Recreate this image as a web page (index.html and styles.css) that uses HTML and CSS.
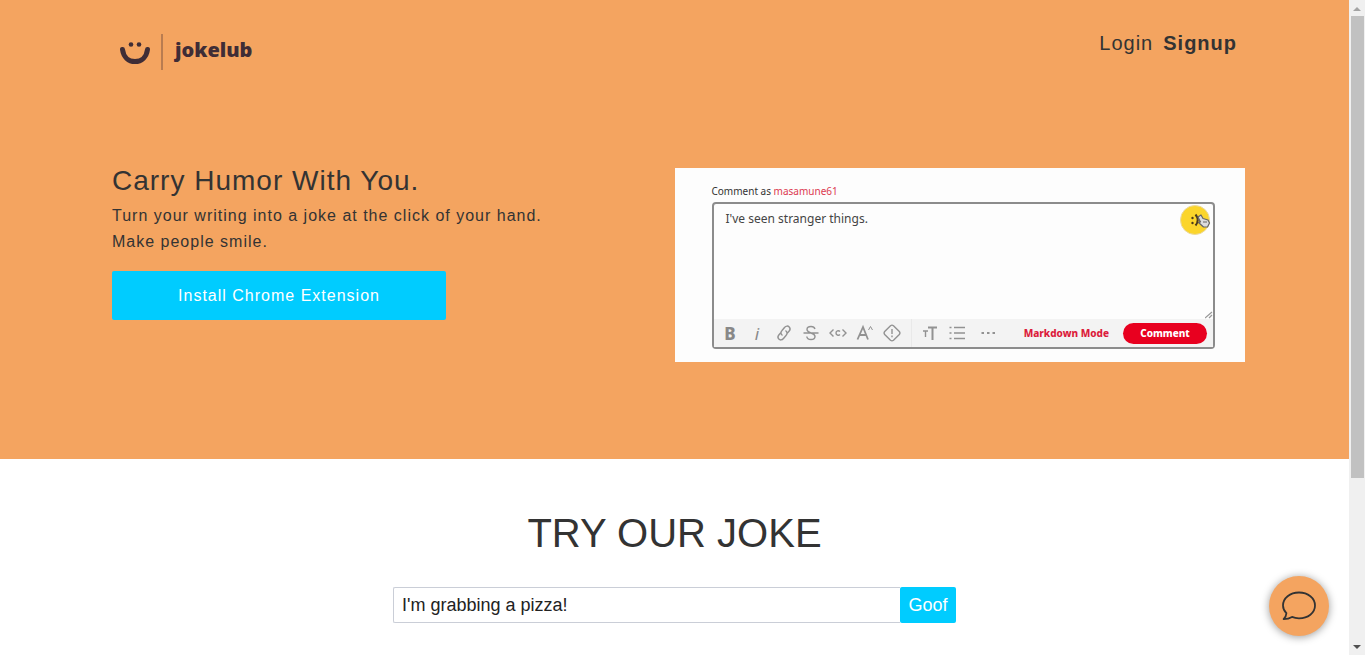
FILE: index.html
```html
<!DOCTYPE html>
<html lang="en">
<head>
  <meta charset="UTF-8">
  <meta name="viewport" content="width=device-width, initial-scale=1.0">
  <title>Jokelub</title>
  <link rel="stylesheet" href="styles.css">
</head>
<body>

  <div class="page">
    <!-- Hero -->
    <div class="hero">
      <header class="navbar">
        <a class="logo" href="#">
          <svg class="logo-smile" width="32" height="26" viewBox="0 0 32 26">
            <circle cx="12" cy="5.500" r="2.300" fill="#3f2d36"/>
            <circle cx="20" cy="5.500" r="2.300" fill="#3f2d36"/>
            <path d="M3.500 10.500C4.500 18 9.500 22.500 16 22.500S27.500 18 28.500 10.500" fill="none" stroke="#3f2d36" stroke-width="5" stroke-linecap="round"/>
          </svg>
          <span class="logo-name">jokelub</span>
        </a>
        <nav class="nav-links">
          <a href="#">Login</a>
          <a class="signup" href="#">Signup</a>
        </nav>
      </header>

      <div class="columns">
        <div class="column intro">
          <h1>Carry Humor With You.</h1>
          <p>Turn your writing into a joke at the click of your hand.<br>Make people smile.</p>
          <button class="install" type="button">Install Chrome Extension</button>
        </div>

        <!-- Demo of the comment box -->
        <div class="column demo">
          <label class="demo-label" for="comment">Comment as <span>masamune61</span></label>
          <div class="demo-box">
            <textarea id="comment" class="demo-text" readonly>I've seen stranger things.</textarea>
            <svg class="demo-emoji" width="32" height="30" viewBox="0 0 32 30">
              <circle cx="15" cy="15" r="14.500" fill="#fbd52b" stroke="#ead9a0" stroke-width="1"/>
              <circle cx="12.500" cy="13" r="1.200" fill="#4a3a1c"/>
              <circle cx="12.500" cy="18" r="1.200" fill="#4a3a1c"/>
              <path d="M15.500 9.500q4.500 5.500 0 11" fill="none" stroke="#4a3a1c" stroke-width="2"/>
              <path d="M18 12l3-2 2 3.500 5 1.500 1.500 3-2 4h-4l-5-4.500 2-.500z" fill="#ddd" stroke="#666" stroke-width="1.200" stroke-linejoin="round"/>
              <path d="M20 17l-2-3M23 17h4" stroke="#666" fill="none"/>
            </svg>
            <svg class="demo-grip" width="8" height="8" viewBox="0 0 8 8">
              <path d="M0 7l7-6M4 7l3-3" stroke="#999" stroke-width="1.200"/>
            </svg>
            <div class="toolbar">
              <button type="button" class="tool bold">B</button>
              <button type="button" class="tool italic">i</button>
              <button type="button" class="tool" aria-label="Link">
                <svg width="18" height="18" viewBox="0 0 18 18"><path d="M7.500 11.500c-2-1.500-2-3.500-.500-5l2.500-3c1.500-1.800 3.500-1.800 4.700-.600 1.200 1.200 1 3-.200 4.400L12 9.500M10.500 6.500c2 1.500 2 3.500.500 5l-2.500 3c-1.500 1.800-3.500 1.800-4.700.600-1.200-1.200-1-3 .200-4.400L6 8.500"/></svg>
              </button>
              <button type="button" class="tool" aria-label="Strikethrough">
                <svg width="18" height="18" viewBox="0 0 18 18"><path d="M13 5c-.500-1.700-2-2.500-4-2.500S5 3.500 5 5.500C5 7.500 7 8.300 9 9s4 1.500 4 3.500-2 3-4 3-4-1-4.200-3M1.500 9h15"/></svg>
              </button>
              <button type="button" class="tool" aria-label="Code">
                <svg width="18" height="18" viewBox="0 0 18 18"><path d="M4.500 5.500L1 9l3.500 3.500M13.500 5.500L17 9l-3.500 3.500M11 7.500C9.500 6 7 7 7 9s2.500 3 4 1.500"/></svg>
              </button>
              <button type="button" class="tool" aria-label="Superscript">
                <svg width="18" height="18" viewBox="0 0 18 18"><path d="M1.500 15.500L7 3l5 12.500M3.500 11h7" stroke-width="1.800"/><path d="M12.500 6l2-3.500 2 3.500" stroke-width="1"/></svg>
              </button>
              <button type="button" class="tool" aria-label="Spoiler">
                <svg width="18" height="18" viewBox="0 0 18 18"><path d="M7.500 1.700q1.500-1.200 3 0l5.800 5.800q1.200 1.500 0 3l-5.800 5.800q-1.500 1.200-3 0L1.700 10.500q-1.200-1.500 0-3zM9 5v5M9 11.500v1.800"/></svg>
              </button>
              <span class="divider"></span>
              <button type="button" class="tool" aria-label="Heading">
                <svg width="18" height="18" viewBox="0 0 18 18"><path d="M7 3.500h9M11.500 3.500v12.500" stroke-width="2"/><path d="M2 7h5M4.500 7v6"/></svg>
              </button>
              <button type="button" class="tool" aria-label="List">
                <svg width="18" height="18" viewBox="0 0 18 18"><path d="M6 3.500h11M6 9h11M6 14.500h11M1.500 3.500h2M1.500 9h2M1.500 14.500h2"/></svg>
              </button>
              <button type="button" class="tool more" aria-label="More">
                <svg width="18" height="18" viewBox="0 0 18 18"><path d="M2.500 9h2.500M8 9h2.500M13.500 9H16" stroke-width="2.200"/></svg>
              </button>
              <button type="button" class="markdown">Markdown Mode</button>
              <button type="button" class="comment">Comment</button>
            </div>
          </div>
        </div>
      </div>
    </div>

    <!-- Try it -->
    <section class="try">
      <h2>TRY OUR JOKE</h2>
      <form class="joke-form">
        <input type="text" value="I'm grabbing a pizza!" aria-label="Your sentence">
        <button type="submit">Goof</button>
      </form>
    </section>

    <button class="chat" type="button" aria-label="Chat">
      <svg width="36" height="32" viewBox="0 0 36 32">
        <path d="M18 2.500c9 0 16 5.500 16 13s-7 12.800-16 12.800c-2.700 0-5-.500-7-1.400-2.500 1.600-5 2.200-8.400 2.200 1.800-1.800 2.700-3.700 2.800-5.900C3.200 21 2 18.500 2 15.500 2 8 9 2.500 18 2.500z" fill="none" stroke="#333" stroke-width="1.800" stroke-linejoin="round"/>
      </svg>
    </button>
  </div>

  <!-- Scrollbar -->
  <div class="scrollbar">
    <span class="arrow-up"></span>
    <span class="thumb"></span>
    <span class="arrow-down"></span>
  </div>

</body>
</html>
```
FILE: styles.css
```css
* {
  margin: 0;
  padding: 0;
  box-sizing: border-box;
}

body {
  display: flex;
  height: 100vh;
  overflow: hidden;
  background: #fff;
  color: #333;
  font-family: "Liberation Sans", Arial, sans-serif;
  font-size: 16px;
}

button {
  border: none;
  font-family: inherit;
  cursor: pointer;
}

a {
  color: inherit;
  text-decoration: none;
}

.page {
  flex: 1;
  overflow: hidden;
}

/* Hero */
.hero {
  background: #f4a460;
  padding: 28px 104px 97px;
  letter-spacing: 1px;
}

.navbar {
  display: flex;
  justify-content: space-between;
  align-items: flex-start;
  padding: 0 8px 0 15px;
  height: 140px;
}

.logo {
  display: flex;
  align-items: center;
  margin-top: 6px;
  height: 36px;
  color: #3f2d36;
  letter-spacing: normal;
}

.logo-smile {
  margin-right: 10px;
}

.logo-name {
  border-left: 2px solid #b97c50;
  padding: 0 0 4px 12px;
  font: 900 20px/32px "Noto Sans", sans-serif;
}

.nav-links {
  display: flex;
  gap: 10px;
  font-size: 20px;
  line-height: 30px;
}

.signup {
  font-weight: bold;
}

.columns {
  display: flex;
}

.column {
  width: 50%;
}

.intro {
  padding: 0 8px;
}

.intro h1 {
  margin-top: -4px;
  font-size: 28px;
  font-weight: normal;
  line-height: 34px;
  margin-bottom: 5px;
}

.intro p {
  line-height: 26px;
  margin-bottom: 16px;
}

.install {
  width: 334px;
  max-width: 100%;
  height: 49px;
  border-radius: 2px;
  background: #0cf;
  color: #fff;
  font-size: 16px;
  letter-spacing: 1px;
}

/* Demo */
.demo {
  background: #fdfdfd;
  padding: 16px 30px 13px 37px;
  font-family: "Noto Sans", sans-serif;
  letter-spacing: normal;
}

.demo-label {
  display: block;
  font-size: 10px;
  line-height: 14px;
  margin-bottom: 4px;
}

.demo-label span {
  color: #dc3a50;
}

.demo-box {
  position: relative;
  border: 2px solid #8c8c8c;
  border-radius: 4px;
}

.demo-text {
  display: block;
  width: 100%;
  height: 115px;
  padding: 6px 12px;
  border: none;
  outline: none;
  resize: none;
  background: none;
  color: #444;
  font: 12px/18px "Noto Sans", sans-serif;
}

.demo-emoji {
  position: absolute;
  top: 1px;
  right: 1px;
}

.demo-grip {
  position: absolute;
  right: 0;
  bottom: 28px;
}

.toolbar {
  display: flex;
  align-items: center;
  height: 28px;
  padding: 0 6px 0 3px;
  background: #f3f3f3;
}

.tool {
  display: flex;
  justify-content: center;
  align-items: center;
  width: 27px;
  height: 28px;
  background: none;
  color: #888;
  font-family: "Noto Sans", sans-serif;
  font-size: 17px;
}

.tool svg {
  fill: none;
  stroke: #929292;
  stroke-width: 1.4;
}

.bold {
  font-weight: 800;
}

.italic {
  font-style: italic;
}

.divider {
  width: 1px;
  height: 28px;
  margin: 0 5px;
  background: #e9e9e9;
}

.more {
  margin-left: 4px;
}

.markdown {
  margin-left: auto;
  background: none;
  color: #dc1c3c;
  font-size: 10px;
  font-weight: 800;
}

.comment {
  width: 84px;
  height: 21px;
  margin-left: 14px;
  border-radius: 11px;
  background: #e8001f;
  color: #fff;
  font-size: 10px;
  font-weight: 800;
}

/* Try it */
.try {
  padding: 50px 16px 0;
}

.try h2 {
  font-size: 40px;
  font-weight: normal;
  line-height: 48px;
  text-align: center;
  margin-bottom: 30px;
}

.joke-form {
  display: flex;
  max-width: 563px;
  margin: 0 auto;
}

.joke-form input {
  flex: 1;
  min-width: 0;
  height: 36px;
  padding: 0 8px;
  border: 1px solid #caced7;
  border-right: none;
  border-radius: 2px 0 0 2px;
  color: #222;
  font-family: inherit;
  font-size: 18px;
}

.joke-form button {
  width: 56px;
  border-radius: 2px;
  background: #0cf;
  color: #fff;
  font-size: 18px;
}

/* Chat bubble */
.chat {
  position: fixed;
  right: 36px;
  bottom: 19px;
  display: flex;
  justify-content: center;
  align-items: center;
  width: 60px;
  height: 60px;
  border-radius: 50%;
  background: #f4a460;
  box-shadow: 0 1px 8px rgba(0, 0, 0, 0.4);
}

/* Scrollbar */
.scrollbar {
  display: flex;
  flex-direction: column;
  align-items: center;
  width: 16px;
  padding: 7px 0 6px;
  background: #f0f0f0;
}

.arrow-up {
  border: 4px solid transparent;
  border-top: none;
  border-bottom-color: #a3a3a3;
}

.thumb {
  width: 13px;
  height: 72%;
  margin: 5px 0 auto;
  background: #c1c1c1;
}

.arrow-down {
  border: 4px solid transparent;
  border-bottom: none;
  border-top-color: #505050;
}
```
